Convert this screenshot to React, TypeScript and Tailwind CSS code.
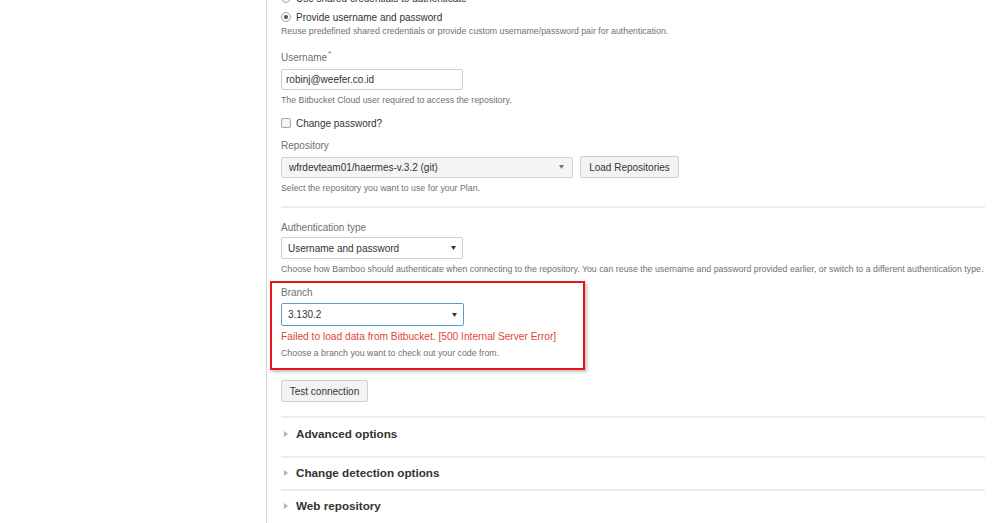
import React from "react";

const font = { fontFamily: '"Liberation Sans", Arial, sans-serif' };

function Caret({ color = "#333" }: { color?: string }) {
  return (
    <svg width="5" height="4" viewBox="0 0 5 4" className="shrink-0">
      <polygon points="0,0 5,0 2.5,4" fill={color} />
    </svg>
  );
}

function Expander({ title }: { title: string }) {
  return (
    <div className="flex h-[30px] items-center">
      <svg width="4" height="6" viewBox="0 0 4 6" className="ml-[3px] mr-[8px] shrink-0">
        <polygon points="0,0 4,3 0,6" fill="#b0b0b0" />
      </svg>
      <span className="text-[11.7px] font-bold text-[#333]">{title}</span>
    </div>
  );
}

function Sep() {
  return <div className="h-[2px] w-[704px] bg-[#ececec]" />;
}

export default function App() {
  return (
    <div className="flex h-[523px] w-[999px] overflow-hidden bg-white" style={font}>
      <div className="w-[267px] shrink-0 border-r border-[#d6d6d6]" />
      <div className="flex flex-col pl-[14px]">
        <div className="-mt-[12px] flex h-[20px] items-center gap-[5px]">
          <span className="h-[10px] w-[10px] rounded-full border border-[#a8a8a8] bg-[#f4f4f4]" />
          <span className="text-[10px] text-[#333]">Use shared credentials to authenticate</span>
        </div>
        <div className="flex h-[18px] items-center gap-[5px]">
          <span className="flex h-[10px] w-[10px] items-center justify-center rounded-full border border-[#a8a8a8] bg-[#f4f4f4]">
            <span className="h-[4px] w-[4px] rounded-full bg-[#555]" />
          </span>
          <span className="text-[10px] text-[#333]">Provide username and password</span>
        </div>
        <div className="flex h-[12px] items-center text-[8.8px] text-[#707070]">
          Reuse predefined shared credentials or provide custom username/password pair for authentication.
        </div>

        <div className="mt-[12px] flex h-[14px] items-center text-[10px] text-[#707070]">
          Username<span className="-mt-[6px] ml-[1px] text-[8px] text-[#d04437]">*</span>
        </div>
        <div className="mt-[5px] flex h-[21px] w-[182px] items-center rounded-[2px] border border-[#ccc] bg-white px-[4px] text-[10px] text-[#333]">
          robinj@weefer.co.id
        </div>
        <div className="mt-[5px] flex h-[12px] items-center text-[8.8px] text-[#707070]">
          The Bitbucket Cloud user required to access the repository.
        </div>

        <div className="mt-[7px] flex h-[18px] items-center gap-[5px]">
          <span className="h-[10px] w-[10px] rounded-[2px] border border-[#a8a8a8] bg-[#f4f4f4]" />
          <span className="text-[10px] text-[#333]">Change password?</span>
        </div>

        <div className="mt-[6px] flex h-[14px] items-center text-[10px] text-[#707070]">Repository</div>
        <div className="mt-[4px] flex h-[22px] items-center gap-[7px]">
          <div className="flex h-[21px] w-[292px] items-center justify-between rounded-[2px] border border-[#d0d0d0] bg-[#f5f5f5] pl-[7px] pr-[8px] text-[10px] text-[#333]">
            <span>wfrdevteam01/haermes-v.3.2 (git)</span>
            <Caret color="#777" />
          </div>
          <div className="flex h-[22px] w-[99px] items-center justify-center rounded-[2px] border border-[#d0d0d0] bg-[#f3f3f3] text-[10px] text-[#333]">
            Load Repositories
          </div>
        </div>
        <div className="mt-[5px] flex h-[12px] items-center text-[8.8px] text-[#707070]">
          Select the repository you want to use for your Plan.
        </div>

        <div className="mt-[11px]">
          <Sep />
        </div>

        <div className="mt-[12px] flex h-[14px] items-center text-[10px] text-[#707070]">Authentication type</div>
        <div className="mt-[3px] flex h-[22px] w-[182px] items-center justify-between rounded-[2px] border border-[#ccc] bg-white pl-[6px] pr-[6px] text-[10px] text-[#333]">
          <span>Username and password</span>
          <Caret />
        </div>
        <div className="mt-[5px] flex h-[12px] items-center whitespace-nowrap text-[8.8px] text-[#707070]">
          Choose how Bamboo should authenticate when connecting to the repository. You can reuse the username and password provided earlier, or switch to a different authentication type.
        </div>

        <div className="-ml-[11px] mt-[5px] w-[315px] border-2 border-[#e8141b] pb-[8px] pl-[9px] pt-[2px] shadow-[2px_2px_3px_rgba(0,0,0,0.25)]">
          <div className="flex h-[14px] items-center text-[10px] text-[#707070]">Branch</div>
          <div className="mt-[4px] flex h-[23px] w-[183px] items-center justify-between rounded-[2px] border border-[#5b9bd5] bg-white pl-[6px] pr-[6px] text-[10px] text-[#333]">
            <span>3.130.2</span>
            <Caret />
          </div>
          <div className="mt-[4px] flex h-[13px] items-center whitespace-nowrap text-[10.2px] text-[#e0443c]">
            Failed to load data from Bitbucket. [500 Internal Server Error]
          </div>
          <div className="mt-[5px] flex h-[12px] items-center text-[8.8px] text-[#707070]">
            Choose a branch you want to check out your code from.
          </div>
        </div>

        <div className="mt-[10px] flex h-[22px] w-[87px] items-center justify-center rounded-[2px] border border-[#d0d0d0] bg-[#f3f3f3] text-[10px] text-[#333]">
          Test connection
        </div>

        <div className="mt-[14px]">
          <Sep />
        </div>
        <div className="mt-[1px]">
          <Expander title="Advanced options" />
        </div>
        <div className="mt-[7px]">
          <Sep />
        </div>
        <Expander title="Change detection options" />
        <div className="mt-[1px]">
          <Sep />
        </div>
        <Expander title="Web repository" />
      </div>
    </div>
  );
}
